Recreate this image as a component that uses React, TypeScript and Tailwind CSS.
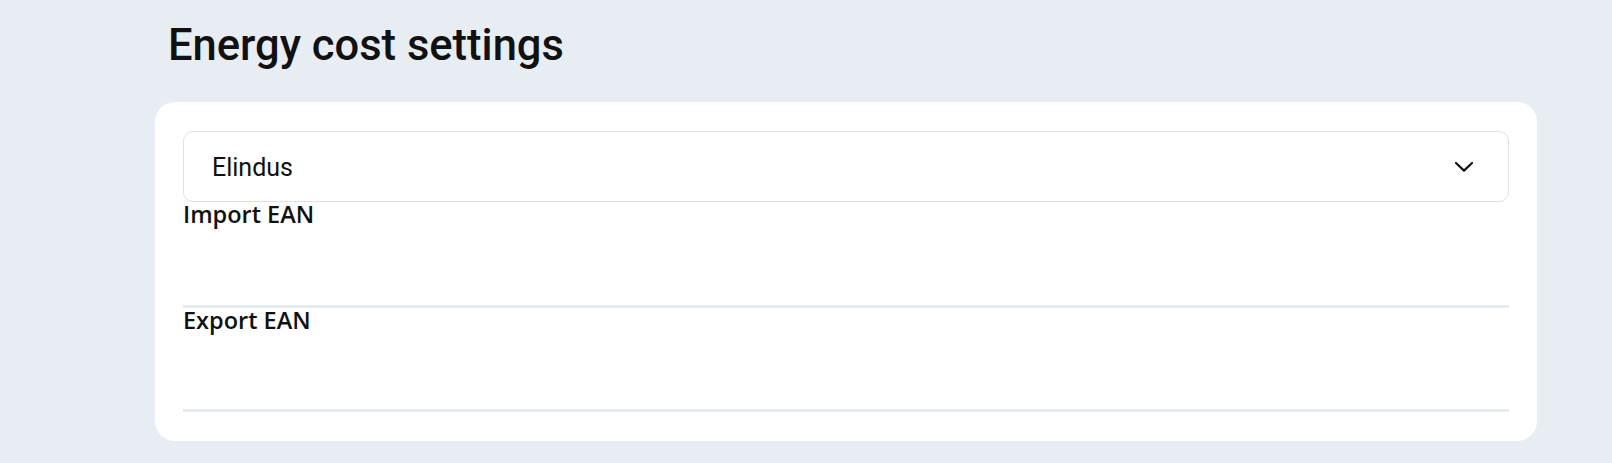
export default function App() {
  return (
    <div className="min-h-[463px] w-full bg-[#e8edf4] pl-[155px] pr-[75px] pt-[20px] pb-[21px] font-['Roboto',sans-serif] text-[#111]">
      <h1 className="pl-[13px] text-[43.5px] leading-[52px] font-medium text-[#111]">Energy cost settings</h1>
      <div className="mt-[30px] rounded-[20px] bg-white px-[28px] pt-[29px] pb-[29px]">
        <div className="flex h-[71px] items-center justify-between rounded-[10px] border border-[#e0e0e0] pl-[28px] pr-[35px]">
          <span className="mt-[2px] text-[25px] text-[#111]">Elindus</span>
          <svg width="18" height="10" viewBox="0 0 18 10" fill="none" className="mt-[1px]">
            <polyline points="1,1 9,8.6 17,1" stroke="#111" strokeWidth="2.2" strokeLinecap="round" strokeLinejoin="round" />
          </svg>
        </div>
        <div className="font-['Open_Sans',sans-serif]">
          <label className="block text-[23.5px] leading-[24px] font-semibold text-[#111]">Import EAN</label>
          <div className="h-[82px] border-b-[3px] border-[#e6eaf1]"></div>
          <label className="block text-[23.5px] leading-[24px] font-semibold text-[#111]">Export EAN</label>
          <div className="h-[80px] border-b-[3px] border-[#e6eaf1]"></div>
        </div>
      </div>
    </div>
  );
}
